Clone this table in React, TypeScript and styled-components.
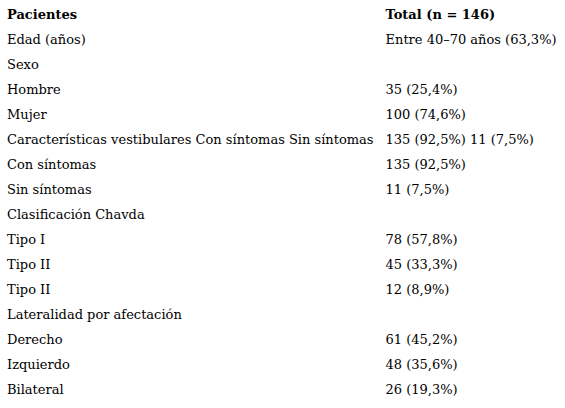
import React from 'react'
import styled, {createGlobalStyle} from 'styled-components'

const GlobalStyle = createGlobalStyle`
  body {
    margin: 0;
    background: #ffffff;
  }
`

const Table = styled.table`
  border-collapse: collapse;
  margin: 2px 0 0 7px;
  font-family: "DejaVu Serif", serif;
  font-size: 13px;
  color: #000000;
  -webkit-font-smoothing: none;
`

const Cell = styled.td<{ $head?: boolean }>`
  height: 25px;
  padding: 0;
  padding-right: 12px;
  vertical-align: middle;
  white-space: nowrap;
  font-weight: ${p => (p.$head ? 'bold' : 'normal')};
`

const rows: [string, string][] = [
    ['Edad (años)', 'Entre 40–70 años (63,3%)'],
    ['Sexo', ''],
    ['Hombre', '35 (25,4%)'],
    ['Mujer', '100 (74,6%)'],
    ['Características vestibulares Con síntomas Sin síntomas', '135 (92,5%) 11 (7,5%)'],
    ['Con síntomas', '135 (92,5%)'],
    ['Sin síntomas', '11 (7,5%)'],
    ['Clasificación Chavda', ''],
    ['Tipo I', '78 (57,8%)'],
    ['Tipo II', '45 (33,3%)'],
    ['Tipo II', '12 (8,9%)'],
    ['Lateralidad por afectación', ''],
    ['Derecho', '61 (45,2%)'],
    ['Izquierdo', '48 (35,6%)'],
    ['Bilateral', '26 (19,3%)'],
]

export default function App() {
    return (
        <>
            <GlobalStyle/>
            <Table>
                <tbody>
                <tr>
                    <Cell $head>Pacientes</Cell>
                    <Cell $head>Total (n = 146)</Cell>
                </tr>
                {rows.map(([a, b], i) => (
                    <tr key={i}>
                        <Cell>{a}</Cell>
                        <Cell>{b}</Cell>
                    </tr>
                ))}
                </tbody>
            </Table>
        </>
    )
}
